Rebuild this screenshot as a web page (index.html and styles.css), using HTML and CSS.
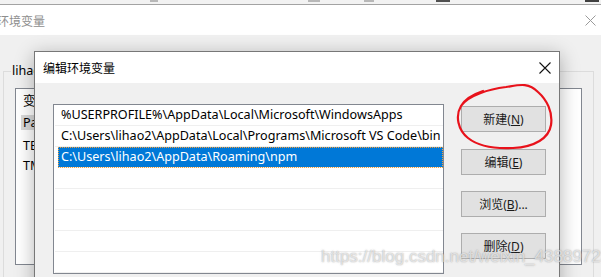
FILE: index.html
```html
<!DOCTYPE html>
<html lang="zh-CN">
  <head>
    <meta charset="UTF-8" />
    <title>编辑环境变量</title>
    <link rel="stylesheet" href="styles.css">
  </head>
  <body>
    <div class="desk">
      <div class="topstrip">
        <i class="tick t1"></i><i class="tick t2"></i><i class="tick t3"></i><i class="tick t4"></i><i class="tick t5"></i>
      </div>

      <div class="win">
        <div class="wintitle">
          <span class="wtext">环境变量</span>
          <svg class="wclose" width="11" height="11" viewBox="0 0 11 11">
            <path d="M0.5 0.5 L10.5 10.5 M10.5 0.5 L0.5 10.5" stroke="#9a9a9a" stroke-width="1" fill="none" />
          </svg>
        </div>
        <div class="winbody">
          <fieldset class="group">
            <legend>lihao2 的用户变量(U)</legend>
            <div class="vlist">
              <div class="vhead">变量</div>
              <div class="vrow dim">Path</div>
              <div class="vrow gap">TEMP</div>
              <div class="vrow">TMP</div>
            </div>
          </fieldset>
        </div>
      </div>

      <div class="dlg">
        <div class="dtitle">
          <span>编辑环境变量</span>
          <span class="dclose">
            <svg width="12" height="12" viewBox="0 0 12 12">
              <path d="M0.5 0.5 L11.5 11.5 M11.5 0.5 L0.5 11.5" stroke="#111" stroke-width="1.1" fill="none" />
            </svg>
          </span>
        </div>
        <div class="dbody">
          <div class="plist">
            <div class="prow">%USERPROFILE%\AppData\Local\Microsoft\WindowsApps</div>
            <div class="prow">C:\Users\lihao2\AppData\Local\Programs\Microsoft VS Code\bin</div>
            <div class="prow on">C:\Users\lihao2\AppData\Roaming\npm</div>
            <div class="prow"></div>
            <div class="prow"></div>
            <div class="prow"></div>
            <div class="prow"></div>
            <div class="prow"></div>
          </div>
          <div class="btns">
            <button class="first">新建(<u>N</u>)</button>
            <button>编辑(<u>E</u>)</button>
            <button>浏览(<u>B</u>)...</button>
            <button>删除(<u>D</u>)</button>
          </div>
        </div>
      </div>

      <!-- hand drawn mark around the new button -->
      <svg class="scribble" width="601" height="277" viewBox="0 0 601 277">
        <path d="M461 106 C468 95 490 89 506 87 C519 85 528 82 538 92 C547 100 553 112 551 125 C549 138 535 147 513 148 C494 149 478 146 468 138 C458 130 455 116 461 106 C465 99 474 94 483 91"
              stroke="#e8121b" stroke-width="2.2" fill="none" stroke-linecap="round" stroke-linejoin="round" />
      </svg>

      <div class="mark">https://blog.csdn.net/weixin_43889723</div>
    </div>
  </body>
</html>
```

FILE: styles.css
```css
body {
  margin: 0;
}
.desk {
  position: relative;
  width: 601px;
  height: 277px;
  overflow: hidden;
  background: #f0f0f0;
  font: 12px "Noto Sans", "Noto Sans CJK SC", sans-serif;
  color: #000;
}
.topstrip {
  height: 4px;
  background: #f2f2f2;
  border-bottom: 1px solid #a3a3a3;
  display: flex;
}
.tick {
  height: 2px;
  width: 8px;
  background: #b8b8b8;
}
.t1 {
  margin-left: 150px;
}
.t2 {
  margin-left: 150px;
  width: 12px;
}
.t3 {
  margin-left: 44px;
  width: 10px;
}
.t4 {
  margin-left: 62px;
  width: 14px;
  background: #505050;
}
.t5 {
  margin-left: 135px;
  width: 14px;
  background: #404040;
}

/* background window */
.wintitle {
  height: 30px;
  background: #fff;
  display: flex;
  align-items: center;
  justify-content: space-between;
}
.wtext {
  margin-left: -3px;
  color: #8e8e8e;
  font-family: "Noto Sans CJK SC", sans-serif;
}
.wclose {
  margin-right: 5px;
}
.winbody {
  padding: 27px 7px 0 3px;
}
.group {
  margin: 0;
  padding: 0 10px 0 7px;
  border: 1px solid #dcdcdc;
  height: 250px;
}
.group legend {
  padding: 0 1px;
  line-height: 18px;
  font-size: 12.6px;
}
.vlist {
  margin: 8px 1px 0 4px;
  height: 175px;
  border: 1px solid #828790;
  background: #fff;
  padding-left: 5px;
  font-size: 12.6px;
}
.vhead {
  height: 24px;
  line-height: 24px;
  padding-left: 2px;
}
.vrow {
  height: 20px;
  line-height: 20px;
  padding-left: 2px;
}
.vrow.dim {
  width: 120px;
  margin-top: 2px;
  height: 15px;
  line-height: 15px;
  background: #d9d9d9;
}
.vrow.gap {
  margin-top: 6px;
}

/* edit dialog */
.dlg {
  position: absolute;
  left: 34px;
  top: 51px;
  width: 524px;
  height: 260px;
  border: 1px solid #777;
  background: #f0f0f0;
  box-shadow: 0 4px 18px rgba(0, 0, 0, 0.3);
}
.dtitle {
  height: 31px;
  background: #fff;
  display: flex;
  align-items: center;
  justify-content: space-between;
  padding-left: 8px;
  font-family: "Noto Sans CJK SC", sans-serif;
}
.dclose {
  width: 29px;
  height: 31px;
  display: flex;
  align-items: center;
  justify-content: center;
}
.dbody {
  display: flex;
  align-items: flex-start;
  padding: 21px 0 0 18px;
}
.plist {
  width: 389px;
  border: 1px solid #828790;
  background: #fff;
  font-size: 12.6px;
}
.prow {
  height: 20px;
  line-height: 20px;
  margin-left: 1px;
  padding-left: 6px;
  border-bottom: 1px solid #efefef;
  white-space: nowrap;
  overflow: hidden;
}
.prow.on {
  margin-left: 4px;
  padding-left: 3px;
  background: #0078d7;
  color: #fff;
  outline: 1px dotted #f5a13c;
  outline-offset: -1px;
}
.btns {
  display: flex;
  flex-direction: column;
  gap: 16px;
  margin: 2px 0 0 17px;
}
.btns button {
  width: 85px;
  height: 26px;
  padding: 0;
  border: 1px solid #adadad;
  background: #e1e1e1;
  font: 12px "Noto Sans", "Noto Sans CJK SC", sans-serif;
  color: #1a1a1a;
}
.btns .first {
  margin-bottom: 1px;
}

/* overlays */
.scribble {
  position: absolute;
  left: 0;
  top: 0;
  pointer-events: none;
}
.mark {
  position: absolute;
  left: 321px;
  top: 247px;
  font: 17px "Liberation Sans", Arial, sans-serif;
  color: rgba(255, 255, 255, 0.6);
  text-shadow: 0 0 1.5px rgba(110, 110, 110, 0.7);
  white-space: nowrap;
}
```
